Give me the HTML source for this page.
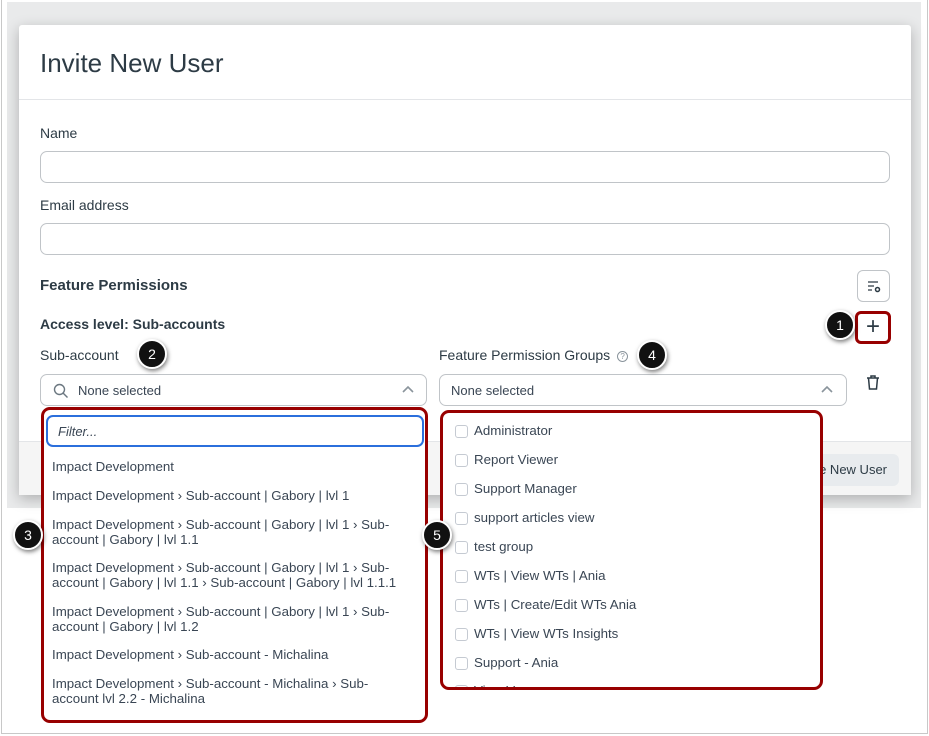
<!DOCTYPE html>
<html><head><style>
*{box-sizing:border-box;margin:0;padding:0}
body{width:929px;height:736px;background:#fff;font-family:"Liberation Sans",sans-serif;color:#2d3b45;position:relative;overflow:hidden}
.abs{position:absolute}
.frame{left:1px;top:0;width:927px;height:734px;border:1px solid #c8c8c8;border-top:none}
.back{left:7px;top:2px;width:914px;height:506px;background:#e9eaeb}
.modal{left:19px;top:25px;width:892px;height:470px;background:#fff;box-shadow:0 4px 14px rgba(0,0,0,.25);border-radius:3px}
.lbl{font-size:14px;color:#2d3b45}
.inp{border:1px solid #c0c4c8;border-radius:7px;background:#fff}
.red{border:3px solid #980000;border-radius:9px;background:#fff}
.item{position:absolute;left:8px;font-size:13.3px;line-height:15px;color:#3a4654;width:375px}
.cb{position:absolute;left:12px;width:13px;height:13px;border:1px solid #c5cad2;border-radius:3px}
.ct{position:absolute;left:31px;font-size:13.3px;color:#3a4654}
.call{width:30px;height:30px;border-radius:50%;background:#111;border:2px solid #fff;box-shadow:1px 2px 4px rgba(0,0,0,.5);color:#fff;font-size:14px;text-align:center;line-height:26px}
</style></head><body>
<div class="abs back"></div>
<div class="abs frame"></div>
<div class="abs modal">
 <div class="abs" style="left:21px;top:23px;font-size:26px;color:#2d3b45">Invite New User</div>
 <div class="abs" style="left:0;top:74px;width:892px;height:1px;background:#e3e5e8"></div>
 <div class="abs lbl" style="left:21px;top:100px">Name</div>
 <div class="abs inp" style="left:21px;top:126px;width:850px;height:32px"></div>
 <div class="abs lbl" style="left:21px;top:172px">Email address</div>
 <div class="abs inp" style="left:21px;top:198px;width:850px;height:32px"></div>
 <div class="abs" style="left:21px;top:252px;font-size:15px;font-weight:bold">Feature Permissions</div>
 <div class="abs inp" style="left:838px;top:245px;width:33px;height:32px;border-radius:6px">
  <svg width="33" height="32" viewBox="0 0 33 32" style="position:absolute;left:-1px;top:-1px"><path d="M11 12h10M11 16h6M11 20h4" stroke="#2d3b45" stroke-width="1.3"/><circle cx="20.5" cy="19.5" r="2" fill="none" stroke="#2d3b45" stroke-width="1.5"/></svg>
 </div>
 <div class="abs" style="left:21px;top:291px;font-size:14px;font-weight:bold">Access level: Sub-accounts</div>
 <div class="abs lbl" style="left:21px;top:322px">Sub-account</div>
 <div class="abs inp" style="left:21px;top:349px;width:387px;height:32px">
  <svg class="abs" style="left:12px;top:8px" width="16" height="16"><circle cx="6.5" cy="6.5" r="5" fill="none" stroke="#6b7780" stroke-width="1.4"/><path d="M10 10l4.5 4.5" stroke="#6b7780" stroke-width="1.4"/></svg>
  <div class="abs" style="left:37px;top:8px;font-size:13px;color:#3a4654">None selected</div>
  <svg class="abs" style="left:361px;top:10px" width="12" height="10"><path d="M1 7l5-5 5 5" fill="none" stroke="#8a949c" stroke-width="1.6"/></svg>
 </div>
 <div class="abs lbl" style="left:420px;top:322px">Feature Permission Groups <span style="display:inline-block;width:11px;height:11px;border:1px solid #8a949c;border-radius:50%;font-size:8px;line-height:9px;text-align:center;color:#8a949c;vertical-align:1px;margin-left:3px">?</span></div>
 <div class="abs inp" style="left:420px;top:349px;width:408px;height:32px">
  <div class="abs" style="left:11px;top:8px;font-size:13px;color:#3a4654">None selected</div>
  <svg class="abs" style="left:381px;top:10px" width="12" height="10"><path d="M1 7l5-5 5 5" fill="none" stroke="#8a949c" stroke-width="1.6"/></svg>
 </div>
 <svg class="abs" style="left:846px;top:349px" width="16" height="18"><path d="M2 4h12M6 4V2h4v2M3.5 4l1 11h7l1-11" fill="none" stroke="#2d3b45" stroke-width="1.5"/></svg>
 <div class="abs" style="left:0;top:416px;width:892px;height:54px;background:#f5f5f5;border-top:1px solid #e3e5e8"></div>
 <div class="abs" style="left:760px;top:429px;width:120px;height:32px;background:#e8ebee;border-radius:6px;font-size:13px;line-height:32px;text-align:right;padding-right:12px">Invite New User</div>
</div>
<div class="abs red" style="left:855px;top:311px;width:36px;height:33px;border-radius:6px"><div style="font-size:24px;line-height:26px;text-align:center;color:#2d3b45">+</div></div>
<div class="abs red" style="left:41px;top:407px;width:387px;height:316px">
 <div class="abs" style="left:2px;top:5px;width:378px;height:32px;border:2px solid #2b6fdc;border-radius:7px"><div class="abs" style="left:10px;top:7px;font-size:13px;font-style:italic;color:#3a4654">Filter...</div></div>
 <div class="item" style="top:49px">Impact Development</div>
 <div class="item" style="top:78px">Impact Development › Sub-account | Gabory | lvl 1</div>
 <div class="item" style="top:107px">Impact Development › Sub-account | Gabory | lvl 1 › Sub-<br>account | Gabory | lvl 1.1</div>
 <div class="item" style="top:150px">Impact Development › Sub-account | Gabory | lvl 1 › Sub-<br>account | Gabory | lvl 1.1 › Sub-account | Gabory | lvl 1.1.1</div>
 <div class="item" style="top:194px">Impact Development › Sub-account | Gabory | lvl 1 › Sub-<br>account | Gabory | lvl 1.2</div>
 <div class="item" style="top:237px">Impact Development › Sub-account - Michalina</div>
 <div class="item" style="top:266px">Impact Development › Sub-account - Michalina › Sub-<br>account lvl 2.2 - Michalina</div>
</div>
<div class="abs red" style="left:440px;top:410px;width:383px;height:280px;overflow:hidden">
 <div class="cb" style="top:12px"></div><div class="ct" style="top:10px">Administrator</div>
 <div class="cb" style="top:41px"></div><div class="ct" style="top:39px">Report Viewer</div>
 <div class="cb" style="top:70px"></div><div class="ct" style="top:68px">Support Manager</div>
 <div class="cb" style="top:99px"></div><div class="ct" style="top:97px">support articles view</div>
 <div class="cb" style="top:128px"></div><div class="ct" style="top:126px">test group</div>
 <div class="cb" style="top:157px"></div><div class="ct" style="top:155px">WTs | View WTs | Ania</div>
 <div class="cb" style="top:186px"></div><div class="ct" style="top:184px">WTs | Create/Edit WTs Ania</div>
 <div class="cb" style="top:215px"></div><div class="ct" style="top:213px">WTs | View WTs Insights</div>
 <div class="cb" style="top:244px"></div><div class="ct" style="top:242px">Support - Ania</div>
 <div class="cb" style="top:272px"></div><div class="ct" style="top:270px">View Ver</div>
</div>
<div class="abs call" style="left:825px;top:310px">1</div>
<div class="abs call" style="left:137px;top:339px">2</div>
<div class="abs call" style="left:13px;top:520px">3</div>
<div class="abs call" style="left:637px;top:340px">4</div>
<div class="abs call" style="left:422px;top:520px">5</div>
</body></html>
